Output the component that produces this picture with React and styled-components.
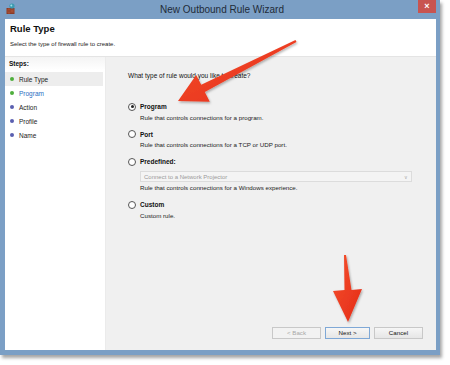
import React from "react";
import styled, { createGlobalStyle } from "styled-components";

const Global = createGlobalStyle`
  html, body { margin: 0; padding: 0; background: #ffffff; }
  body { font-family: "Liberation Sans", Arial, sans-serif; }
`;

const Page = styled.div`
  position: relative;
  width: 450px;
  height: 365px;
  background: #ffffff;
  overflow: hidden;
`;

const Window = styled.div`
  width: 440px;
  height: 355px;
  box-sizing: border-box;
  background: #7b9fc5;
  padding: 0 4px 5px 5px;
  display: flex;
  flex-direction: column;
  box-shadow: 2px 3px 3px rgba(60, 60, 60, 0.45);
`;

const TitleBar = styled.div`
  height: 19px;
  display: grid;
  grid-template-columns: 1fr auto 1fr;
  align-items: start;
`;

const AppIcon = styled.svg`
  width: 10px;
  height: 12px;
  margin: 3px 0 0 1px;
`;

const Title = styled.div`
  font-size: 10px;
  line-height: 19px;
  color: #1f2b38;
  padding-left: 3px;
`;

const CloseBtn = styled.div`
  justify-self: end;
  width: 18px;
  height: 13px;
  background: #c85450;
  color: #ffffff;
  font-size: 9px;
  line-height: 12px;
  text-align: center;
  font-weight: bold;
`;

const Header = styled.div`
  height: 38px;
  background: #ffffff;
  box-sizing: border-box;
  padding: 4px 5px 0 5px;
  border-bottom: 1px solid #e4e4e4;
`;

const HeaderTitle = styled.div`
  font-size: 9.5px;
  font-weight: bold;
  color: #111;
  line-height: 12px;
`;

const HeaderSub = styled.div`
  font-size: 6px;
  color: #222;
  margin-top: 5px;
  line-height: 8px;
`;

const Body = styled.div`
  flex: 1;
  display: flex;
  min-height: 0;
`;

const Sidebar = styled.div`
  width: 100px;
  background: #ffffff;
  display: flex;
  flex-direction: column;
  border-right: 1px solid #ebebeb;
`;

const StepsHead = styled.div`
  height: 13px;
  padding-left: 4px;
  font-size: 6.5px;
  font-weight: bold;
  line-height: 13px;
  color: #111;
  background: linear-gradient(#f4f4f4, #ffffff);
`;

const StepList = styled.div`
  display: flex;
  flex-direction: column;
  padding-top: 2px;
`;

const Step = styled.div`
  height: 14px;
  margin-right: 2px;
  display: flex;
  align-items: center;
  gap: 5px;
  padding-left: 5px;
  font-size: 6.5px;
  color: ${(p) => (p.$current ? "#2a6ebf" : "#222")};
  background: ${(p) => (p.$active ? "#ededed" : "transparent")};
`;

const Bullet = styled.span`
  width: 4px;
  height: 4px;
  border-radius: 50%;
  background: ${(p) => (p.$done ? "#4fae3c" : "#5a5fb0")};
`;

const Content = styled.div`
  flex: 1;
  background: #f0f0f0;
  display: flex;
  flex-direction: column;
  padding: 15px 13px 11px 22px;
`;

const Question = styled.div`
  font-size: 6.5px;
  color: #111;
  line-height: 8px;
`;

const Options = styled.div`
  margin-top: 22px;
  display: flex;
  flex-direction: column;
  gap: 8px;
`;

const Option = styled.div`
  display: flex;
  flex-direction: column;
`;

const OptionRow = styled.div`
  display: flex;
  align-items: center;
  gap: 4px;
  height: 9px;
`;

const Radio = styled.span`
  width: 6px;
  height: 6px;
  border-radius: 50%;
  border: 1px solid #555;
  background: #fff;
  display: flex;
  align-items: center;
  justify-content: center;
  &::after {
    content: "";
    width: 3px;
    height: 3px;
    border-radius: 50%;
    background: ${(p) => (p.$checked ? "#222" : "transparent")};
  }
`;

const OptionLabel = styled.span`
  font-size: 6.5px;
  font-weight: bold;
  color: #111;
`;

const OptionDesc = styled.div`
  font-size: 6.2px;
  color: #222;
  margin-left: 12px;
  margin-top: ${(p) => (p.$tight ? "2px" : "2.5px")};
  line-height: 8px;
`;

const Select = styled.div`
  margin: 5px 11px 0 12px;
  height: 11px;
  box-sizing: border-box;
  border: 1px solid #dcdcdc;
  background: #f4f4f4;
  display: flex;
  align-items: center;
  justify-content: space-between;
  padding: 0 3px 0 3px;
  font-size: 6px;
  color: #9a9a9a;
`;

const Chevron = styled.span`
  font-size: 5px;
  color: #aaa;
`;

const Spacer = styled.div`
  flex: 1;
`;

const Buttons = styled.div`
  display: flex;
  justify-content: flex-end;
  gap: 4px;
`;

const Button = styled.div`
  width: ${(p) => (p.$primary ? "45px" : "49px")};
  height: 12px;
  box-sizing: border-box;
  border: 1px solid ${(p) => (p.$primary ? "#7fa8d6" : "#c8c8c8")};
  background: ${(p) => (p.$disabled ? "#f2f2f2" : "linear-gradient(#f6f6f6, #e6e6e6)")};
  color: ${(p) => (p.$disabled ? "#a8a8a8" : "#111")};
  font-size: 6.2px;
  line-height: 10px;
  text-align: center;
`;

const Overlay = styled.svg`
  position: absolute;
  left: 0;
  top: 0;
  width: 450px;
  height: 365px;
  pointer-events: none;
`;

const steps = [
  { name: "Rule Type", done: true, active: true },
  { name: "Program", done: true, current: true },
  { name: "Action" },
  { name: "Profile" },
  { name: "Name" },
];

export default function App() {
  return (
    <Page>
      <Global />
      <Window>
        <TitleBar>
          <AppIcon viewBox="0 0 10 12">
            <rect x="0.5" y="5" width="8" height="6" fill="#8a3a26" />
            <path d="M0.5 7h8M0.5 9h8M3 5v2M6 7v2M3 9v2" stroke="#c46a4a" strokeWidth="0.5" />
            <circle cx="6" cy="3" r="2.6" fill="#3c9ab0" />
            <circle cx="5.3" cy="2.4" r="1" fill="#9fe0e8" />
          </AppIcon>
          <Title>New Outbound Rule Wizard</Title>
          <CloseBtn>×</CloseBtn>
        </TitleBar>
        <Header>
          <HeaderTitle>Rule Type</HeaderTitle>
          <HeaderSub>Select the type of firewall rule to create.</HeaderSub>
        </Header>
        <Body>
          <Sidebar>
            <StepsHead>Steps:</StepsHead>
            <StepList>
              {steps.map((s) => (
                <Step key={s.name} $active={s.active} $current={s.current}>
                  <Bullet $done={s.done} />
                  {s.name}
                </Step>
              ))}
            </StepList>
          </Sidebar>
          <Content>
            <Question>What type of rule would you like to create?</Question>
            <Options>
              <Option>
                <OptionRow>
                  <Radio $checked />
                  <OptionLabel>Program</OptionLabel>
                </OptionRow>
                <OptionDesc>Rule that controls connections for a program.</OptionDesc>
              </Option>
              <Option>
                <OptionRow>
                  <Radio />
                  <OptionLabel>Port</OptionLabel>
                </OptionRow>
                <OptionDesc>Rule that controls connections for a TCP or UDP port.</OptionDesc>
              </Option>
              <Option>
                <OptionRow>
                  <Radio />
                  <OptionLabel>Predefined:</OptionLabel>
                </OptionRow>
                <Select>
                  Connect to a Network Projector
                  <Chevron>∨</Chevron>
                </Select>
                <OptionDesc $tight>Rule that controls connections for a Windows experience.</OptionDesc>
              </Option>
              <Option>
                <OptionRow>
                  <Radio />
                  <OptionLabel>Custom</OptionLabel>
                </OptionRow>
                <OptionDesc>Custom rule.</OptionDesc>
              </Option>
            </Options>
            <Spacer />
            <Buttons>
              <Button $disabled>&lt; Back</Button>
              <Button $primary>Next &gt;</Button>
              <Button>Cancel</Button>
            </Buttons>
          </Content>
        </Body>
      </Window>
      <Overlay viewBox="0 0 450 365">
        <defs>
          <linearGradient id="ag" x1="0" y1="0" x2="1" y2="1">
            <stop offset="0" stopColor="#f5512d" />
            <stop offset="1" stopColor="#e42b18" />
          </linearGradient>
          <filter id="sh" x="-20%" y="-20%" width="140%" height="140%">
            <feDropShadow dx="1" dy="1.5" stdDeviation="1.2" floodColor="#000" floodOpacity="0.3" />
          </filter>
        </defs>
        <polygon
          filter="url(#sh)"
          fill="url(#ag)"
          points="295.5,40.1 201.2,84.7 196.2,74.9 178,101 209.8,101.7 204.8,91.9 296.5,41.9"
        />
        <polygon
          filter="url(#sh)"
          fill="url(#ag)"
          points="344,255 346,255 351.5,290 362,289 348,322 333,291 344.5,290"
        />
      </Overlay>
    </Page>
  );
}
